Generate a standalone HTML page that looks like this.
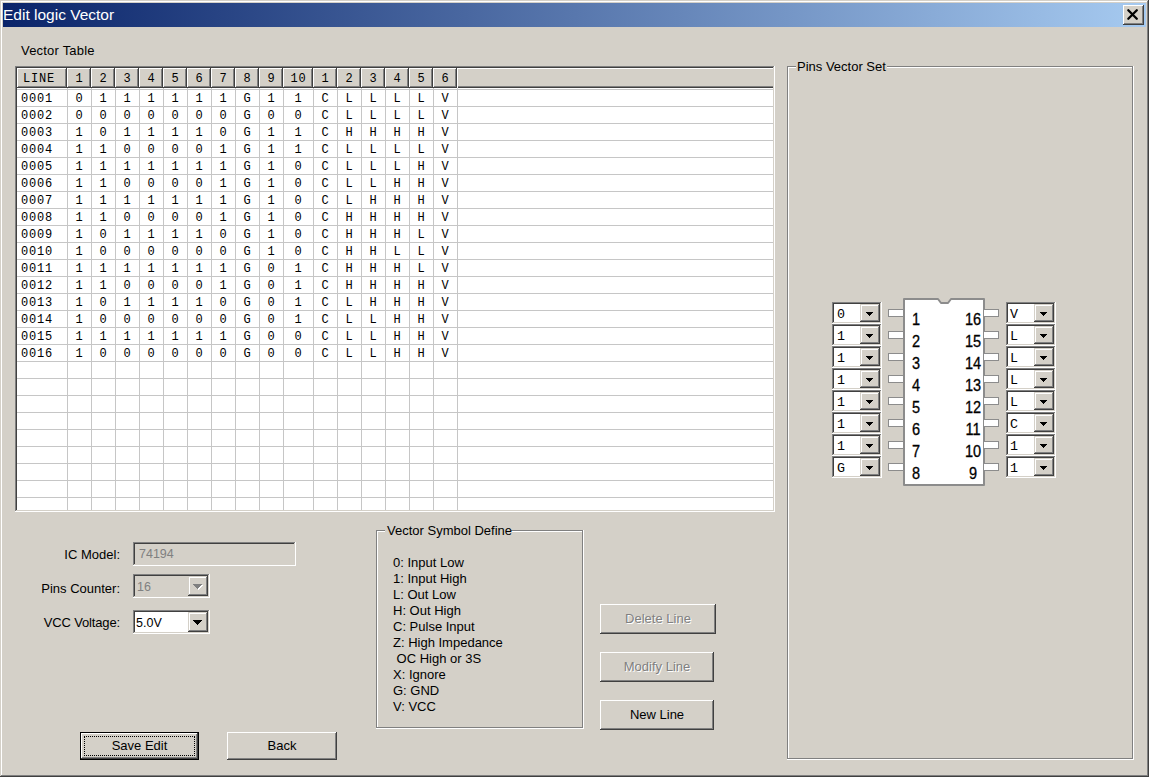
<!DOCTYPE html>
<html><head><meta charset="utf-8"><style>
html,body{margin:0;padding:0;}
body{width:1149px;height:777px;overflow:hidden;background:#d4d0c8;position:relative;font-family:'Liberation Sans', sans-serif;}
body>div,body>svg{position:absolute;}
</style></head><body>
<div style="left:0px;top:0px;width:1149px;height:1px;background:#d4d0c8;"></div>
<div style="left:0px;top:0px;width:1px;height:777px;background:#d4d0c8;"></div>
<div style="left:1px;top:1px;width:1147px;height:1px;background:#ffffff;"></div>
<div style="left:1px;top:1px;width:1px;height:775px;background:#ffffff;"></div>
<div style="left:1147px;top:1px;width:1px;height:775px;background:#808080;"></div>
<div style="left:1px;top:775px;width:1147px;height:1px;background:#808080;"></div>
<div style="left:1148px;top:0px;width:1px;height:777px;background:#404040;"></div>
<div style="left:0px;top:776px;width:1149px;height:1px;background:#404040;"></div>
<div style="left:3px;top:3px;width:1143px;height:24px;background:linear-gradient(to right,#0a246a,#a6caf0);"></div>
<div style="left:3px;top:6.88px;font:normal 15.5px/15.5px 'Liberation Sans', sans-serif;color:#fff;white-space:pre;">Edit logic Vector</div>
<div style="left:1123px;top:5px;width:21px;height:20px;background:#d4d0c8;box-shadow:inset -1px -1px 0 0 #404040,inset 1px 1px 0 0 #ffffff,inset -2px -2px 0 0 #808080,inset 2px 2px 0 0 #d4d0c8"></div>
<svg style="left:1123px;top:5px;width:21px;height:20px" width="21" height="20"><path d="M5.3 5.2L13.8 13.8M13.8 5.2L5.3 13.8" stroke="#000" stroke-width="2.3" stroke-linecap="round" fill="none"/></svg>
<div style="left:21px;top:44.00px;font:normal 13px/13px 'Liberation Sans', sans-serif;color:#000;white-space:pre;letter-spacing:0.2px;">Vector Table</div>
<div style="left:15px;top:66px;width:760px;height:446px;background:#ffffff;box-shadow:inset -1px -1px 0 0 #ffffff,inset 1px 1px 0 0 #808080,inset -2px -2px 0 0 #d4d0c8,inset 2px 2px 0 0 #404040"></div>
<div style="left:17px;top:68px;width:50px;height:20px;background:#d4d0c8;box-shadow:inset -1px -1px 0 0 #404040,inset 1px 1px 0 0 #ffffff,inset -2px -2px 0 0 #808080,inset 2px 2px 0 0 #d4d0c8"></div>
<div style="left:67px;top:68px;width:24px;height:20px;background:#d4d0c8;box-shadow:inset -1px -1px 0 0 #404040,inset 1px 1px 0 0 #ffffff,inset -2px -2px 0 0 #808080,inset 2px 2px 0 0 #d4d0c8"></div>
<div style="left:91px;top:68px;width:24px;height:20px;background:#d4d0c8;box-shadow:inset -1px -1px 0 0 #404040,inset 1px 1px 0 0 #ffffff,inset -2px -2px 0 0 #808080,inset 2px 2px 0 0 #d4d0c8"></div>
<div style="left:115px;top:68px;width:24px;height:20px;background:#d4d0c8;box-shadow:inset -1px -1px 0 0 #404040,inset 1px 1px 0 0 #ffffff,inset -2px -2px 0 0 #808080,inset 2px 2px 0 0 #d4d0c8"></div>
<div style="left:139px;top:68px;width:24px;height:20px;background:#d4d0c8;box-shadow:inset -1px -1px 0 0 #404040,inset 1px 1px 0 0 #ffffff,inset -2px -2px 0 0 #808080,inset 2px 2px 0 0 #d4d0c8"></div>
<div style="left:163px;top:68px;width:24px;height:20px;background:#d4d0c8;box-shadow:inset -1px -1px 0 0 #404040,inset 1px 1px 0 0 #ffffff,inset -2px -2px 0 0 #808080,inset 2px 2px 0 0 #d4d0c8"></div>
<div style="left:187px;top:68px;width:24px;height:20px;background:#d4d0c8;box-shadow:inset -1px -1px 0 0 #404040,inset 1px 1px 0 0 #ffffff,inset -2px -2px 0 0 #808080,inset 2px 2px 0 0 #d4d0c8"></div>
<div style="left:211px;top:68px;width:24px;height:20px;background:#d4d0c8;box-shadow:inset -1px -1px 0 0 #404040,inset 1px 1px 0 0 #ffffff,inset -2px -2px 0 0 #808080,inset 2px 2px 0 0 #d4d0c8"></div>
<div style="left:235px;top:68px;width:24px;height:20px;background:#d4d0c8;box-shadow:inset -1px -1px 0 0 #404040,inset 1px 1px 0 0 #ffffff,inset -2px -2px 0 0 #808080,inset 2px 2px 0 0 #d4d0c8"></div>
<div style="left:259px;top:68px;width:24px;height:20px;background:#d4d0c8;box-shadow:inset -1px -1px 0 0 #404040,inset 1px 1px 0 0 #ffffff,inset -2px -2px 0 0 #808080,inset 2px 2px 0 0 #d4d0c8"></div>
<div style="left:283px;top:68px;width:30px;height:20px;background:#d4d0c8;box-shadow:inset -1px -1px 0 0 #404040,inset 1px 1px 0 0 #ffffff,inset -2px -2px 0 0 #808080,inset 2px 2px 0 0 #d4d0c8"></div>
<div style="left:313px;top:68px;width:24px;height:20px;background:#d4d0c8;box-shadow:inset -1px -1px 0 0 #404040,inset 1px 1px 0 0 #ffffff,inset -2px -2px 0 0 #808080,inset 2px 2px 0 0 #d4d0c8"></div>
<div style="left:337px;top:68px;width:24px;height:20px;background:#d4d0c8;box-shadow:inset -1px -1px 0 0 #404040,inset 1px 1px 0 0 #ffffff,inset -2px -2px 0 0 #808080,inset 2px 2px 0 0 #d4d0c8"></div>
<div style="left:361px;top:68px;width:24px;height:20px;background:#d4d0c8;box-shadow:inset -1px -1px 0 0 #404040,inset 1px 1px 0 0 #ffffff,inset -2px -2px 0 0 #808080,inset 2px 2px 0 0 #d4d0c8"></div>
<div style="left:385px;top:68px;width:24px;height:20px;background:#d4d0c8;box-shadow:inset -1px -1px 0 0 #404040,inset 1px 1px 0 0 #ffffff,inset -2px -2px 0 0 #808080,inset 2px 2px 0 0 #d4d0c8"></div>
<div style="left:409px;top:68px;width:24px;height:20px;background:#d4d0c8;box-shadow:inset -1px -1px 0 0 #404040,inset 1px 1px 0 0 #ffffff,inset -2px -2px 0 0 #808080,inset 2px 2px 0 0 #d4d0c8"></div>
<div style="left:433px;top:68px;width:24px;height:20px;background:#d4d0c8;box-shadow:inset -1px -1px 0 0 #404040,inset 1px 1px 0 0 #ffffff,inset -2px -2px 0 0 #808080,inset 2px 2px 0 0 #d4d0c8"></div>
<div style="left:457px;top:68px;width:316px;height:20px;background:#d4d0c8;box-shadow:inset 1px 1px 0 0 #fff,inset 0 -1px 0 0 #404040,inset 0 -2px 0 0 #808080"></div>
<div style="left:17px;top:89px;width:756px;height:1px;background:#c6c6c6;"></div>
<div style="left:17px;top:106px;width:756px;height:1px;background:#c6c6c6;"></div>
<div style="left:17px;top:123px;width:756px;height:1px;background:#c6c6c6;"></div>
<div style="left:17px;top:140px;width:756px;height:1px;background:#c6c6c6;"></div>
<div style="left:17px;top:157px;width:756px;height:1px;background:#c6c6c6;"></div>
<div style="left:17px;top:174px;width:756px;height:1px;background:#c6c6c6;"></div>
<div style="left:17px;top:191px;width:756px;height:1px;background:#c6c6c6;"></div>
<div style="left:17px;top:208px;width:756px;height:1px;background:#c6c6c6;"></div>
<div style="left:17px;top:225px;width:756px;height:1px;background:#c6c6c6;"></div>
<div style="left:17px;top:242px;width:756px;height:1px;background:#c6c6c6;"></div>
<div style="left:17px;top:259px;width:756px;height:1px;background:#c6c6c6;"></div>
<div style="left:17px;top:276px;width:756px;height:1px;background:#c6c6c6;"></div>
<div style="left:17px;top:293px;width:756px;height:1px;background:#c6c6c6;"></div>
<div style="left:17px;top:310px;width:756px;height:1px;background:#c6c6c6;"></div>
<div style="left:17px;top:327px;width:756px;height:1px;background:#c6c6c6;"></div>
<div style="left:17px;top:344px;width:756px;height:1px;background:#c6c6c6;"></div>
<div style="left:17px;top:361px;width:756px;height:1px;background:#c6c6c6;"></div>
<div style="left:17px;top:378px;width:756px;height:1px;background:#c6c6c6;"></div>
<div style="left:17px;top:395px;width:756px;height:1px;background:#c6c6c6;"></div>
<div style="left:17px;top:412px;width:756px;height:1px;background:#c6c6c6;"></div>
<div style="left:17px;top:429px;width:756px;height:1px;background:#c6c6c6;"></div>
<div style="left:17px;top:446px;width:756px;height:1px;background:#c6c6c6;"></div>
<div style="left:17px;top:463px;width:756px;height:1px;background:#c6c6c6;"></div>
<div style="left:17px;top:480px;width:756px;height:1px;background:#c6c6c6;"></div>
<div style="left:17px;top:497px;width:756px;height:1px;background:#c6c6c6;"></div>
<div style="left:67px;top:88px;width:1px;height:422px;background:#c6c6c6;"></div>
<div style="left:91px;top:88px;width:1px;height:422px;background:#c6c6c6;"></div>
<div style="left:115px;top:88px;width:1px;height:422px;background:#c6c6c6;"></div>
<div style="left:139px;top:88px;width:1px;height:422px;background:#c6c6c6;"></div>
<div style="left:163px;top:88px;width:1px;height:422px;background:#c6c6c6;"></div>
<div style="left:187px;top:88px;width:1px;height:422px;background:#c6c6c6;"></div>
<div style="left:211px;top:88px;width:1px;height:422px;background:#c6c6c6;"></div>
<div style="left:235px;top:88px;width:1px;height:422px;background:#c6c6c6;"></div>
<div style="left:259px;top:88px;width:1px;height:422px;background:#c6c6c6;"></div>
<div style="left:283px;top:88px;width:1px;height:422px;background:#c6c6c6;"></div>
<div style="left:313px;top:88px;width:1px;height:422px;background:#c6c6c6;"></div>
<div style="left:337px;top:88px;width:1px;height:422px;background:#c6c6c6;"></div>
<div style="left:361px;top:88px;width:1px;height:422px;background:#c6c6c6;"></div>
<div style="left:385px;top:88px;width:1px;height:422px;background:#c6c6c6;"></div>
<div style="left:409px;top:88px;width:1px;height:422px;background:#c6c6c6;"></div>
<div style="left:433px;top:88px;width:1px;height:422px;background:#c6c6c6;"></div>
<div style="left:457px;top:88px;width:1px;height:422px;background:#c6c6c6;"></div>
<div style="left:23px;top:73.40px;font:normal 12px/12px 'Liberation Mono', monospace;color:#000;white-space:pre;letter-spacing:0.8px;">LINE</div>
<div style="left:-121.0px;width:400px;text-align:center;top:73.40px;font:normal 12px/12px 'Liberation Mono', monospace;color:#000;white-space:pre;">1</div>
<div style="left:-97.0px;width:400px;text-align:center;top:73.40px;font:normal 12px/12px 'Liberation Mono', monospace;color:#000;white-space:pre;">2</div>
<div style="left:-73.0px;width:400px;text-align:center;top:73.40px;font:normal 12px/12px 'Liberation Mono', monospace;color:#000;white-space:pre;">3</div>
<div style="left:-49.0px;width:400px;text-align:center;top:73.40px;font:normal 12px/12px 'Liberation Mono', monospace;color:#000;white-space:pre;">4</div>
<div style="left:-25.0px;width:400px;text-align:center;top:73.40px;font:normal 12px/12px 'Liberation Mono', monospace;color:#000;white-space:pre;">5</div>
<div style="left:-1.0px;width:400px;text-align:center;top:73.40px;font:normal 12px/12px 'Liberation Mono', monospace;color:#000;white-space:pre;">6</div>
<div style="left:23.0px;width:400px;text-align:center;top:73.40px;font:normal 12px/12px 'Liberation Mono', monospace;color:#000;white-space:pre;">7</div>
<div style="left:47.0px;width:400px;text-align:center;top:73.40px;font:normal 12px/12px 'Liberation Mono', monospace;color:#000;white-space:pre;">8</div>
<div style="left:71.0px;width:400px;text-align:center;top:73.40px;font:normal 12px/12px 'Liberation Mono', monospace;color:#000;white-space:pre;">9</div>
<div style="left:98.0px;width:400px;text-align:center;top:73.40px;font:normal 12px/12px 'Liberation Mono', monospace;color:#000;white-space:pre;letter-spacing:0.8px;text-indent:0.8px;">10</div>
<div style="left:125.0px;width:400px;text-align:center;top:73.40px;font:normal 12px/12px 'Liberation Mono', monospace;color:#000;white-space:pre;">1</div>
<div style="left:149.0px;width:400px;text-align:center;top:73.40px;font:normal 12px/12px 'Liberation Mono', monospace;color:#000;white-space:pre;">2</div>
<div style="left:173.0px;width:400px;text-align:center;top:73.40px;font:normal 12px/12px 'Liberation Mono', monospace;color:#000;white-space:pre;">3</div>
<div style="left:197.0px;width:400px;text-align:center;top:73.40px;font:normal 12px/12px 'Liberation Mono', monospace;color:#000;white-space:pre;">4</div>
<div style="left:221.0px;width:400px;text-align:center;top:73.40px;font:normal 12px/12px 'Liberation Mono', monospace;color:#000;white-space:pre;">5</div>
<div style="left:245.0px;width:400px;text-align:center;top:73.40px;font:normal 12px/12px 'Liberation Mono', monospace;color:#000;white-space:pre;">6</div>
<div style="left:21px;top:93.40px;font:normal 12px/12px 'Liberation Mono', monospace;color:#000;white-space:pre;letter-spacing:0.8px;">0001</div>
<div style="left:-121.0px;width:400px;text-align:center;top:93.40px;font:normal 12px/12px 'Liberation Mono', monospace;color:#000;white-space:pre;">0</div>
<div style="left:-97.0px;width:400px;text-align:center;top:93.40px;font:normal 12px/12px 'Liberation Mono', monospace;color:#000;white-space:pre;">1</div>
<div style="left:-73.0px;width:400px;text-align:center;top:93.40px;font:normal 12px/12px 'Liberation Mono', monospace;color:#000;white-space:pre;">1</div>
<div style="left:-49.0px;width:400px;text-align:center;top:93.40px;font:normal 12px/12px 'Liberation Mono', monospace;color:#000;white-space:pre;">1</div>
<div style="left:-25.0px;width:400px;text-align:center;top:93.40px;font:normal 12px/12px 'Liberation Mono', monospace;color:#000;white-space:pre;">1</div>
<div style="left:-1.0px;width:400px;text-align:center;top:93.40px;font:normal 12px/12px 'Liberation Mono', monospace;color:#000;white-space:pre;">1</div>
<div style="left:23.0px;width:400px;text-align:center;top:93.40px;font:normal 12px/12px 'Liberation Mono', monospace;color:#000;white-space:pre;">1</div>
<div style="left:47.0px;width:400px;text-align:center;top:93.40px;font:normal 12px/12px 'Liberation Mono', monospace;color:#000;white-space:pre;">G</div>
<div style="left:71.0px;width:400px;text-align:center;top:93.40px;font:normal 12px/12px 'Liberation Mono', monospace;color:#000;white-space:pre;">1</div>
<div style="left:98.0px;width:400px;text-align:center;top:93.40px;font:normal 12px/12px 'Liberation Mono', monospace;color:#000;white-space:pre;">1</div>
<div style="left:125.0px;width:400px;text-align:center;top:93.40px;font:normal 12px/12px 'Liberation Mono', monospace;color:#000;white-space:pre;">C</div>
<div style="left:149.0px;width:400px;text-align:center;top:93.40px;font:normal 12px/12px 'Liberation Mono', monospace;color:#000;white-space:pre;">L</div>
<div style="left:173.0px;width:400px;text-align:center;top:93.40px;font:normal 12px/12px 'Liberation Mono', monospace;color:#000;white-space:pre;">L</div>
<div style="left:197.0px;width:400px;text-align:center;top:93.40px;font:normal 12px/12px 'Liberation Mono', monospace;color:#000;white-space:pre;">L</div>
<div style="left:221.0px;width:400px;text-align:center;top:93.40px;font:normal 12px/12px 'Liberation Mono', monospace;color:#000;white-space:pre;">L</div>
<div style="left:245.0px;width:400px;text-align:center;top:93.40px;font:normal 12px/12px 'Liberation Mono', monospace;color:#000;white-space:pre;">V</div>
<div style="left:21px;top:110.40px;font:normal 12px/12px 'Liberation Mono', monospace;color:#000;white-space:pre;letter-spacing:0.8px;">0002</div>
<div style="left:-121.0px;width:400px;text-align:center;top:110.40px;font:normal 12px/12px 'Liberation Mono', monospace;color:#000;white-space:pre;">0</div>
<div style="left:-97.0px;width:400px;text-align:center;top:110.40px;font:normal 12px/12px 'Liberation Mono', monospace;color:#000;white-space:pre;">0</div>
<div style="left:-73.0px;width:400px;text-align:center;top:110.40px;font:normal 12px/12px 'Liberation Mono', monospace;color:#000;white-space:pre;">0</div>
<div style="left:-49.0px;width:400px;text-align:center;top:110.40px;font:normal 12px/12px 'Liberation Mono', monospace;color:#000;white-space:pre;">0</div>
<div style="left:-25.0px;width:400px;text-align:center;top:110.40px;font:normal 12px/12px 'Liberation Mono', monospace;color:#000;white-space:pre;">0</div>
<div style="left:-1.0px;width:400px;text-align:center;top:110.40px;font:normal 12px/12px 'Liberation Mono', monospace;color:#000;white-space:pre;">0</div>
<div style="left:23.0px;width:400px;text-align:center;top:110.40px;font:normal 12px/12px 'Liberation Mono', monospace;color:#000;white-space:pre;">0</div>
<div style="left:47.0px;width:400px;text-align:center;top:110.40px;font:normal 12px/12px 'Liberation Mono', monospace;color:#000;white-space:pre;">G</div>
<div style="left:71.0px;width:400px;text-align:center;top:110.40px;font:normal 12px/12px 'Liberation Mono', monospace;color:#000;white-space:pre;">0</div>
<div style="left:98.0px;width:400px;text-align:center;top:110.40px;font:normal 12px/12px 'Liberation Mono', monospace;color:#000;white-space:pre;">0</div>
<div style="left:125.0px;width:400px;text-align:center;top:110.40px;font:normal 12px/12px 'Liberation Mono', monospace;color:#000;white-space:pre;">C</div>
<div style="left:149.0px;width:400px;text-align:center;top:110.40px;font:normal 12px/12px 'Liberation Mono', monospace;color:#000;white-space:pre;">L</div>
<div style="left:173.0px;width:400px;text-align:center;top:110.40px;font:normal 12px/12px 'Liberation Mono', monospace;color:#000;white-space:pre;">L</div>
<div style="left:197.0px;width:400px;text-align:center;top:110.40px;font:normal 12px/12px 'Liberation Mono', monospace;color:#000;white-space:pre;">L</div>
<div style="left:221.0px;width:400px;text-align:center;top:110.40px;font:normal 12px/12px 'Liberation Mono', monospace;color:#000;white-space:pre;">L</div>
<div style="left:245.0px;width:400px;text-align:center;top:110.40px;font:normal 12px/12px 'Liberation Mono', monospace;color:#000;white-space:pre;">V</div>
<div style="left:21px;top:127.40px;font:normal 12px/12px 'Liberation Mono', monospace;color:#000;white-space:pre;letter-spacing:0.8px;">0003</div>
<div style="left:-121.0px;width:400px;text-align:center;top:127.40px;font:normal 12px/12px 'Liberation Mono', monospace;color:#000;white-space:pre;">1</div>
<div style="left:-97.0px;width:400px;text-align:center;top:127.40px;font:normal 12px/12px 'Liberation Mono', monospace;color:#000;white-space:pre;">0</div>
<div style="left:-73.0px;width:400px;text-align:center;top:127.40px;font:normal 12px/12px 'Liberation Mono', monospace;color:#000;white-space:pre;">1</div>
<div style="left:-49.0px;width:400px;text-align:center;top:127.40px;font:normal 12px/12px 'Liberation Mono', monospace;color:#000;white-space:pre;">1</div>
<div style="left:-25.0px;width:400px;text-align:center;top:127.40px;font:normal 12px/12px 'Liberation Mono', monospace;color:#000;white-space:pre;">1</div>
<div style="left:-1.0px;width:400px;text-align:center;top:127.40px;font:normal 12px/12px 'Liberation Mono', monospace;color:#000;white-space:pre;">1</div>
<div style="left:23.0px;width:400px;text-align:center;top:127.40px;font:normal 12px/12px 'Liberation Mono', monospace;color:#000;white-space:pre;">0</div>
<div style="left:47.0px;width:400px;text-align:center;top:127.40px;font:normal 12px/12px 'Liberation Mono', monospace;color:#000;white-space:pre;">G</div>
<div style="left:71.0px;width:400px;text-align:center;top:127.40px;font:normal 12px/12px 'Liberation Mono', monospace;color:#000;white-space:pre;">1</div>
<div style="left:98.0px;width:400px;text-align:center;top:127.40px;font:normal 12px/12px 'Liberation Mono', monospace;color:#000;white-space:pre;">1</div>
<div style="left:125.0px;width:400px;text-align:center;top:127.40px;font:normal 12px/12px 'Liberation Mono', monospace;color:#000;white-space:pre;">C</div>
<div style="left:149.0px;width:400px;text-align:center;top:127.40px;font:normal 12px/12px 'Liberation Mono', monospace;color:#000;white-space:pre;">H</div>
<div style="left:173.0px;width:400px;text-align:center;top:127.40px;font:normal 12px/12px 'Liberation Mono', monospace;color:#000;white-space:pre;">H</div>
<div style="left:197.0px;width:400px;text-align:center;top:127.40px;font:normal 12px/12px 'Liberation Mono', monospace;color:#000;white-space:pre;">H</div>
<div style="left:221.0px;width:400px;text-align:center;top:127.40px;font:normal 12px/12px 'Liberation Mono', monospace;color:#000;white-space:pre;">H</div>
<div style="left:245.0px;width:400px;text-align:center;top:127.40px;font:normal 12px/12px 'Liberation Mono', monospace;color:#000;white-space:pre;">V</div>
<div style="left:21px;top:144.40px;font:normal 12px/12px 'Liberation Mono', monospace;color:#000;white-space:pre;letter-spacing:0.8px;">0004</div>
<div style="left:-121.0px;width:400px;text-align:center;top:144.40px;font:normal 12px/12px 'Liberation Mono', monospace;color:#000;white-space:pre;">1</div>
<div style="left:-97.0px;width:400px;text-align:center;top:144.40px;font:normal 12px/12px 'Liberation Mono', monospace;color:#000;white-space:pre;">1</div>
<div style="left:-73.0px;width:400px;text-align:center;top:144.40px;font:normal 12px/12px 'Liberation Mono', monospace;color:#000;white-space:pre;">0</div>
<div style="left:-49.0px;width:400px;text-align:center;top:144.40px;font:normal 12px/12px 'Liberation Mono', monospace;color:#000;white-space:pre;">0</div>
<div style="left:-25.0px;width:400px;text-align:center;top:144.40px;font:normal 12px/12px 'Liberation Mono', monospace;color:#000;white-space:pre;">0</div>
<div style="left:-1.0px;width:400px;text-align:center;top:144.40px;font:normal 12px/12px 'Liberation Mono', monospace;color:#000;white-space:pre;">0</div>
<div style="left:23.0px;width:400px;text-align:center;top:144.40px;font:normal 12px/12px 'Liberation Mono', monospace;color:#000;white-space:pre;">1</div>
<div style="left:47.0px;width:400px;text-align:center;top:144.40px;font:normal 12px/12px 'Liberation Mono', monospace;color:#000;white-space:pre;">G</div>
<div style="left:71.0px;width:400px;text-align:center;top:144.40px;font:normal 12px/12px 'Liberation Mono', monospace;color:#000;white-space:pre;">1</div>
<div style="left:98.0px;width:400px;text-align:center;top:144.40px;font:normal 12px/12px 'Liberation Mono', monospace;color:#000;white-space:pre;">1</div>
<div style="left:125.0px;width:400px;text-align:center;top:144.40px;font:normal 12px/12px 'Liberation Mono', monospace;color:#000;white-space:pre;">C</div>
<div style="left:149.0px;width:400px;text-align:center;top:144.40px;font:normal 12px/12px 'Liberation Mono', monospace;color:#000;white-space:pre;">L</div>
<div style="left:173.0px;width:400px;text-align:center;top:144.40px;font:normal 12px/12px 'Liberation Mono', monospace;color:#000;white-space:pre;">L</div>
<div style="left:197.0px;width:400px;text-align:center;top:144.40px;font:normal 12px/12px 'Liberation Mono', monospace;color:#000;white-space:pre;">L</div>
<div style="left:221.0px;width:400px;text-align:center;top:144.40px;font:normal 12px/12px 'Liberation Mono', monospace;color:#000;white-space:pre;">L</div>
<div style="left:245.0px;width:400px;text-align:center;top:144.40px;font:normal 12px/12px 'Liberation Mono', monospace;color:#000;white-space:pre;">V</div>
<div style="left:21px;top:161.40px;font:normal 12px/12px 'Liberation Mono', monospace;color:#000;white-space:pre;letter-spacing:0.8px;">0005</div>
<div style="left:-121.0px;width:400px;text-align:center;top:161.40px;font:normal 12px/12px 'Liberation Mono', monospace;color:#000;white-space:pre;">1</div>
<div style="left:-97.0px;width:400px;text-align:center;top:161.40px;font:normal 12px/12px 'Liberation Mono', monospace;color:#000;white-space:pre;">1</div>
<div style="left:-73.0px;width:400px;text-align:center;top:161.40px;font:normal 12px/12px 'Liberation Mono', monospace;color:#000;white-space:pre;">1</div>
<div style="left:-49.0px;width:400px;text-align:center;top:161.40px;font:normal 12px/12px 'Liberation Mono', monospace;color:#000;white-space:pre;">1</div>
<div style="left:-25.0px;width:400px;text-align:center;top:161.40px;font:normal 12px/12px 'Liberation Mono', monospace;color:#000;white-space:pre;">1</div>
<div style="left:-1.0px;width:400px;text-align:center;top:161.40px;font:normal 12px/12px 'Liberation Mono', monospace;color:#000;white-space:pre;">1</div>
<div style="left:23.0px;width:400px;text-align:center;top:161.40px;font:normal 12px/12px 'Liberation Mono', monospace;color:#000;white-space:pre;">1</div>
<div style="left:47.0px;width:400px;text-align:center;top:161.40px;font:normal 12px/12px 'Liberation Mono', monospace;color:#000;white-space:pre;">G</div>
<div style="left:71.0px;width:400px;text-align:center;top:161.40px;font:normal 12px/12px 'Liberation Mono', monospace;color:#000;white-space:pre;">1</div>
<div style="left:98.0px;width:400px;text-align:center;top:161.40px;font:normal 12px/12px 'Liberation Mono', monospace;color:#000;white-space:pre;">0</div>
<div style="left:125.0px;width:400px;text-align:center;top:161.40px;font:normal 12px/12px 'Liberation Mono', monospace;color:#000;white-space:pre;">C</div>
<div style="left:149.0px;width:400px;text-align:center;top:161.40px;font:normal 12px/12px 'Liberation Mono', monospace;color:#000;white-space:pre;">L</div>
<div style="left:173.0px;width:400px;text-align:center;top:161.40px;font:normal 12px/12px 'Liberation Mono', monospace;color:#000;white-space:pre;">L</div>
<div style="left:197.0px;width:400px;text-align:center;top:161.40px;font:normal 12px/12px 'Liberation Mono', monospace;color:#000;white-space:pre;">L</div>
<div style="left:221.0px;width:400px;text-align:center;top:161.40px;font:normal 12px/12px 'Liberation Mono', monospace;color:#000;white-space:pre;">H</div>
<div style="left:245.0px;width:400px;text-align:center;top:161.40px;font:normal 12px/12px 'Liberation Mono', monospace;color:#000;white-space:pre;">V</div>
<div style="left:21px;top:178.40px;font:normal 12px/12px 'Liberation Mono', monospace;color:#000;white-space:pre;letter-spacing:0.8px;">0006</div>
<div style="left:-121.0px;width:400px;text-align:center;top:178.40px;font:normal 12px/12px 'Liberation Mono', monospace;color:#000;white-space:pre;">1</div>
<div style="left:-97.0px;width:400px;text-align:center;top:178.40px;font:normal 12px/12px 'Liberation Mono', monospace;color:#000;white-space:pre;">1</div>
<div style="left:-73.0px;width:400px;text-align:center;top:178.40px;font:normal 12px/12px 'Liberation Mono', monospace;color:#000;white-space:pre;">0</div>
<div style="left:-49.0px;width:400px;text-align:center;top:178.40px;font:normal 12px/12px 'Liberation Mono', monospace;color:#000;white-space:pre;">0</div>
<div style="left:-25.0px;width:400px;text-align:center;top:178.40px;font:normal 12px/12px 'Liberation Mono', monospace;color:#000;white-space:pre;">0</div>
<div style="left:-1.0px;width:400px;text-align:center;top:178.40px;font:normal 12px/12px 'Liberation Mono', monospace;color:#000;white-space:pre;">0</div>
<div style="left:23.0px;width:400px;text-align:center;top:178.40px;font:normal 12px/12px 'Liberation Mono', monospace;color:#000;white-space:pre;">1</div>
<div style="left:47.0px;width:400px;text-align:center;top:178.40px;font:normal 12px/12px 'Liberation Mono', monospace;color:#000;white-space:pre;">G</div>
<div style="left:71.0px;width:400px;text-align:center;top:178.40px;font:normal 12px/12px 'Liberation Mono', monospace;color:#000;white-space:pre;">1</div>
<div style="left:98.0px;width:400px;text-align:center;top:178.40px;font:normal 12px/12px 'Liberation Mono', monospace;color:#000;white-space:pre;">0</div>
<div style="left:125.0px;width:400px;text-align:center;top:178.40px;font:normal 12px/12px 'Liberation Mono', monospace;color:#000;white-space:pre;">C</div>
<div style="left:149.0px;width:400px;text-align:center;top:178.40px;font:normal 12px/12px 'Liberation Mono', monospace;color:#000;white-space:pre;">L</div>
<div style="left:173.0px;width:400px;text-align:center;top:178.40px;font:normal 12px/12px 'Liberation Mono', monospace;color:#000;white-space:pre;">L</div>
<div style="left:197.0px;width:400px;text-align:center;top:178.40px;font:normal 12px/12px 'Liberation Mono', monospace;color:#000;white-space:pre;">H</div>
<div style="left:221.0px;width:400px;text-align:center;top:178.40px;font:normal 12px/12px 'Liberation Mono', monospace;color:#000;white-space:pre;">H</div>
<div style="left:245.0px;width:400px;text-align:center;top:178.40px;font:normal 12px/12px 'Liberation Mono', monospace;color:#000;white-space:pre;">V</div>
<div style="left:21px;top:195.40px;font:normal 12px/12px 'Liberation Mono', monospace;color:#000;white-space:pre;letter-spacing:0.8px;">0007</div>
<div style="left:-121.0px;width:400px;text-align:center;top:195.40px;font:normal 12px/12px 'Liberation Mono', monospace;color:#000;white-space:pre;">1</div>
<div style="left:-97.0px;width:400px;text-align:center;top:195.40px;font:normal 12px/12px 'Liberation Mono', monospace;color:#000;white-space:pre;">1</div>
<div style="left:-73.0px;width:400px;text-align:center;top:195.40px;font:normal 12px/12px 'Liberation Mono', monospace;color:#000;white-space:pre;">1</div>
<div style="left:-49.0px;width:400px;text-align:center;top:195.40px;font:normal 12px/12px 'Liberation Mono', monospace;color:#000;white-space:pre;">1</div>
<div style="left:-25.0px;width:400px;text-align:center;top:195.40px;font:normal 12px/12px 'Liberation Mono', monospace;color:#000;white-space:pre;">1</div>
<div style="left:-1.0px;width:400px;text-align:center;top:195.40px;font:normal 12px/12px 'Liberation Mono', monospace;color:#000;white-space:pre;">1</div>
<div style="left:23.0px;width:400px;text-align:center;top:195.40px;font:normal 12px/12px 'Liberation Mono', monospace;color:#000;white-space:pre;">1</div>
<div style="left:47.0px;width:400px;text-align:center;top:195.40px;font:normal 12px/12px 'Liberation Mono', monospace;color:#000;white-space:pre;">G</div>
<div style="left:71.0px;width:400px;text-align:center;top:195.40px;font:normal 12px/12px 'Liberation Mono', monospace;color:#000;white-space:pre;">1</div>
<div style="left:98.0px;width:400px;text-align:center;top:195.40px;font:normal 12px/12px 'Liberation Mono', monospace;color:#000;white-space:pre;">0</div>
<div style="left:125.0px;width:400px;text-align:center;top:195.40px;font:normal 12px/12px 'Liberation Mono', monospace;color:#000;white-space:pre;">C</div>
<div style="left:149.0px;width:400px;text-align:center;top:195.40px;font:normal 12px/12px 'Liberation Mono', monospace;color:#000;white-space:pre;">L</div>
<div style="left:173.0px;width:400px;text-align:center;top:195.40px;font:normal 12px/12px 'Liberation Mono', monospace;color:#000;white-space:pre;">H</div>
<div style="left:197.0px;width:400px;text-align:center;top:195.40px;font:normal 12px/12px 'Liberation Mono', monospace;color:#000;white-space:pre;">H</div>
<div style="left:221.0px;width:400px;text-align:center;top:195.40px;font:normal 12px/12px 'Liberation Mono', monospace;color:#000;white-space:pre;">H</div>
<div style="left:245.0px;width:400px;text-align:center;top:195.40px;font:normal 12px/12px 'Liberation Mono', monospace;color:#000;white-space:pre;">V</div>
<div style="left:21px;top:212.40px;font:normal 12px/12px 'Liberation Mono', monospace;color:#000;white-space:pre;letter-spacing:0.8px;">0008</div>
<div style="left:-121.0px;width:400px;text-align:center;top:212.40px;font:normal 12px/12px 'Liberation Mono', monospace;color:#000;white-space:pre;">1</div>
<div style="left:-97.0px;width:400px;text-align:center;top:212.40px;font:normal 12px/12px 'Liberation Mono', monospace;color:#000;white-space:pre;">1</div>
<div style="left:-73.0px;width:400px;text-align:center;top:212.40px;font:normal 12px/12px 'Liberation Mono', monospace;color:#000;white-space:pre;">0</div>
<div style="left:-49.0px;width:400px;text-align:center;top:212.40px;font:normal 12px/12px 'Liberation Mono', monospace;color:#000;white-space:pre;">0</div>
<div style="left:-25.0px;width:400px;text-align:center;top:212.40px;font:normal 12px/12px 'Liberation Mono', monospace;color:#000;white-space:pre;">0</div>
<div style="left:-1.0px;width:400px;text-align:center;top:212.40px;font:normal 12px/12px 'Liberation Mono', monospace;color:#000;white-space:pre;">0</div>
<div style="left:23.0px;width:400px;text-align:center;top:212.40px;font:normal 12px/12px 'Liberation Mono', monospace;color:#000;white-space:pre;">1</div>
<div style="left:47.0px;width:400px;text-align:center;top:212.40px;font:normal 12px/12px 'Liberation Mono', monospace;color:#000;white-space:pre;">G</div>
<div style="left:71.0px;width:400px;text-align:center;top:212.40px;font:normal 12px/12px 'Liberation Mono', monospace;color:#000;white-space:pre;">1</div>
<div style="left:98.0px;width:400px;text-align:center;top:212.40px;font:normal 12px/12px 'Liberation Mono', monospace;color:#000;white-space:pre;">0</div>
<div style="left:125.0px;width:400px;text-align:center;top:212.40px;font:normal 12px/12px 'Liberation Mono', monospace;color:#000;white-space:pre;">C</div>
<div style="left:149.0px;width:400px;text-align:center;top:212.40px;font:normal 12px/12px 'Liberation Mono', monospace;color:#000;white-space:pre;">H</div>
<div style="left:173.0px;width:400px;text-align:center;top:212.40px;font:normal 12px/12px 'Liberation Mono', monospace;color:#000;white-space:pre;">H</div>
<div style="left:197.0px;width:400px;text-align:center;top:212.40px;font:normal 12px/12px 'Liberation Mono', monospace;color:#000;white-space:pre;">H</div>
<div style="left:221.0px;width:400px;text-align:center;top:212.40px;font:normal 12px/12px 'Liberation Mono', monospace;color:#000;white-space:pre;">H</div>
<div style="left:245.0px;width:400px;text-align:center;top:212.40px;font:normal 12px/12px 'Liberation Mono', monospace;color:#000;white-space:pre;">V</div>
<div style="left:21px;top:229.40px;font:normal 12px/12px 'Liberation Mono', monospace;color:#000;white-space:pre;letter-spacing:0.8px;">0009</div>
<div style="left:-121.0px;width:400px;text-align:center;top:229.40px;font:normal 12px/12px 'Liberation Mono', monospace;color:#000;white-space:pre;">1</div>
<div style="left:-97.0px;width:400px;text-align:center;top:229.40px;font:normal 12px/12px 'Liberation Mono', monospace;color:#000;white-space:pre;">0</div>
<div style="left:-73.0px;width:400px;text-align:center;top:229.40px;font:normal 12px/12px 'Liberation Mono', monospace;color:#000;white-space:pre;">1</div>
<div style="left:-49.0px;width:400px;text-align:center;top:229.40px;font:normal 12px/12px 'Liberation Mono', monospace;color:#000;white-space:pre;">1</div>
<div style="left:-25.0px;width:400px;text-align:center;top:229.40px;font:normal 12px/12px 'Liberation Mono', monospace;color:#000;white-space:pre;">1</div>
<div style="left:-1.0px;width:400px;text-align:center;top:229.40px;font:normal 12px/12px 'Liberation Mono', monospace;color:#000;white-space:pre;">1</div>
<div style="left:23.0px;width:400px;text-align:center;top:229.40px;font:normal 12px/12px 'Liberation Mono', monospace;color:#000;white-space:pre;">0</div>
<div style="left:47.0px;width:400px;text-align:center;top:229.40px;font:normal 12px/12px 'Liberation Mono', monospace;color:#000;white-space:pre;">G</div>
<div style="left:71.0px;width:400px;text-align:center;top:229.40px;font:normal 12px/12px 'Liberation Mono', monospace;color:#000;white-space:pre;">1</div>
<div style="left:98.0px;width:400px;text-align:center;top:229.40px;font:normal 12px/12px 'Liberation Mono', monospace;color:#000;white-space:pre;">0</div>
<div style="left:125.0px;width:400px;text-align:center;top:229.40px;font:normal 12px/12px 'Liberation Mono', monospace;color:#000;white-space:pre;">C</div>
<div style="left:149.0px;width:400px;text-align:center;top:229.40px;font:normal 12px/12px 'Liberation Mono', monospace;color:#000;white-space:pre;">H</div>
<div style="left:173.0px;width:400px;text-align:center;top:229.40px;font:normal 12px/12px 'Liberation Mono', monospace;color:#000;white-space:pre;">H</div>
<div style="left:197.0px;width:400px;text-align:center;top:229.40px;font:normal 12px/12px 'Liberation Mono', monospace;color:#000;white-space:pre;">H</div>
<div style="left:221.0px;width:400px;text-align:center;top:229.40px;font:normal 12px/12px 'Liberation Mono', monospace;color:#000;white-space:pre;">L</div>
<div style="left:245.0px;width:400px;text-align:center;top:229.40px;font:normal 12px/12px 'Liberation Mono', monospace;color:#000;white-space:pre;">V</div>
<div style="left:21px;top:246.40px;font:normal 12px/12px 'Liberation Mono', monospace;color:#000;white-space:pre;letter-spacing:0.8px;">0010</div>
<div style="left:-121.0px;width:400px;text-align:center;top:246.40px;font:normal 12px/12px 'Liberation Mono', monospace;color:#000;white-space:pre;">1</div>
<div style="left:-97.0px;width:400px;text-align:center;top:246.40px;font:normal 12px/12px 'Liberation Mono', monospace;color:#000;white-space:pre;">0</div>
<div style="left:-73.0px;width:400px;text-align:center;top:246.40px;font:normal 12px/12px 'Liberation Mono', monospace;color:#000;white-space:pre;">0</div>
<div style="left:-49.0px;width:400px;text-align:center;top:246.40px;font:normal 12px/12px 'Liberation Mono', monospace;color:#000;white-space:pre;">0</div>
<div style="left:-25.0px;width:400px;text-align:center;top:246.40px;font:normal 12px/12px 'Liberation Mono', monospace;color:#000;white-space:pre;">0</div>
<div style="left:-1.0px;width:400px;text-align:center;top:246.40px;font:normal 12px/12px 'Liberation Mono', monospace;color:#000;white-space:pre;">0</div>
<div style="left:23.0px;width:400px;text-align:center;top:246.40px;font:normal 12px/12px 'Liberation Mono', monospace;color:#000;white-space:pre;">0</div>
<div style="left:47.0px;width:400px;text-align:center;top:246.40px;font:normal 12px/12px 'Liberation Mono', monospace;color:#000;white-space:pre;">G</div>
<div style="left:71.0px;width:400px;text-align:center;top:246.40px;font:normal 12px/12px 'Liberation Mono', monospace;color:#000;white-space:pre;">1</div>
<div style="left:98.0px;width:400px;text-align:center;top:246.40px;font:normal 12px/12px 'Liberation Mono', monospace;color:#000;white-space:pre;">0</div>
<div style="left:125.0px;width:400px;text-align:center;top:246.40px;font:normal 12px/12px 'Liberation Mono', monospace;color:#000;white-space:pre;">C</div>
<div style="left:149.0px;width:400px;text-align:center;top:246.40px;font:normal 12px/12px 'Liberation Mono', monospace;color:#000;white-space:pre;">H</div>
<div style="left:173.0px;width:400px;text-align:center;top:246.40px;font:normal 12px/12px 'Liberation Mono', monospace;color:#000;white-space:pre;">H</div>
<div style="left:197.0px;width:400px;text-align:center;top:246.40px;font:normal 12px/12px 'Liberation Mono', monospace;color:#000;white-space:pre;">L</div>
<div style="left:221.0px;width:400px;text-align:center;top:246.40px;font:normal 12px/12px 'Liberation Mono', monospace;color:#000;white-space:pre;">L</div>
<div style="left:245.0px;width:400px;text-align:center;top:246.40px;font:normal 12px/12px 'Liberation Mono', monospace;color:#000;white-space:pre;">V</div>
<div style="left:21px;top:263.40px;font:normal 12px/12px 'Liberation Mono', monospace;color:#000;white-space:pre;letter-spacing:0.8px;">0011</div>
<div style="left:-121.0px;width:400px;text-align:center;top:263.40px;font:normal 12px/12px 'Liberation Mono', monospace;color:#000;white-space:pre;">1</div>
<div style="left:-97.0px;width:400px;text-align:center;top:263.40px;font:normal 12px/12px 'Liberation Mono', monospace;color:#000;white-space:pre;">1</div>
<div style="left:-73.0px;width:400px;text-align:center;top:263.40px;font:normal 12px/12px 'Liberation Mono', monospace;color:#000;white-space:pre;">1</div>
<div style="left:-49.0px;width:400px;text-align:center;top:263.40px;font:normal 12px/12px 'Liberation Mono', monospace;color:#000;white-space:pre;">1</div>
<div style="left:-25.0px;width:400px;text-align:center;top:263.40px;font:normal 12px/12px 'Liberation Mono', monospace;color:#000;white-space:pre;">1</div>
<div style="left:-1.0px;width:400px;text-align:center;top:263.40px;font:normal 12px/12px 'Liberation Mono', monospace;color:#000;white-space:pre;">1</div>
<div style="left:23.0px;width:400px;text-align:center;top:263.40px;font:normal 12px/12px 'Liberation Mono', monospace;color:#000;white-space:pre;">1</div>
<div style="left:47.0px;width:400px;text-align:center;top:263.40px;font:normal 12px/12px 'Liberation Mono', monospace;color:#000;white-space:pre;">G</div>
<div style="left:71.0px;width:400px;text-align:center;top:263.40px;font:normal 12px/12px 'Liberation Mono', monospace;color:#000;white-space:pre;">0</div>
<div style="left:98.0px;width:400px;text-align:center;top:263.40px;font:normal 12px/12px 'Liberation Mono', monospace;color:#000;white-space:pre;">1</div>
<div style="left:125.0px;width:400px;text-align:center;top:263.40px;font:normal 12px/12px 'Liberation Mono', monospace;color:#000;white-space:pre;">C</div>
<div style="left:149.0px;width:400px;text-align:center;top:263.40px;font:normal 12px/12px 'Liberation Mono', monospace;color:#000;white-space:pre;">H</div>
<div style="left:173.0px;width:400px;text-align:center;top:263.40px;font:normal 12px/12px 'Liberation Mono', monospace;color:#000;white-space:pre;">H</div>
<div style="left:197.0px;width:400px;text-align:center;top:263.40px;font:normal 12px/12px 'Liberation Mono', monospace;color:#000;white-space:pre;">H</div>
<div style="left:221.0px;width:400px;text-align:center;top:263.40px;font:normal 12px/12px 'Liberation Mono', monospace;color:#000;white-space:pre;">L</div>
<div style="left:245.0px;width:400px;text-align:center;top:263.40px;font:normal 12px/12px 'Liberation Mono', monospace;color:#000;white-space:pre;">V</div>
<div style="left:21px;top:280.40px;font:normal 12px/12px 'Liberation Mono', monospace;color:#000;white-space:pre;letter-spacing:0.8px;">0012</div>
<div style="left:-121.0px;width:400px;text-align:center;top:280.40px;font:normal 12px/12px 'Liberation Mono', monospace;color:#000;white-space:pre;">1</div>
<div style="left:-97.0px;width:400px;text-align:center;top:280.40px;font:normal 12px/12px 'Liberation Mono', monospace;color:#000;white-space:pre;">1</div>
<div style="left:-73.0px;width:400px;text-align:center;top:280.40px;font:normal 12px/12px 'Liberation Mono', monospace;color:#000;white-space:pre;">0</div>
<div style="left:-49.0px;width:400px;text-align:center;top:280.40px;font:normal 12px/12px 'Liberation Mono', monospace;color:#000;white-space:pre;">0</div>
<div style="left:-25.0px;width:400px;text-align:center;top:280.40px;font:normal 12px/12px 'Liberation Mono', monospace;color:#000;white-space:pre;">0</div>
<div style="left:-1.0px;width:400px;text-align:center;top:280.40px;font:normal 12px/12px 'Liberation Mono', monospace;color:#000;white-space:pre;">0</div>
<div style="left:23.0px;width:400px;text-align:center;top:280.40px;font:normal 12px/12px 'Liberation Mono', monospace;color:#000;white-space:pre;">1</div>
<div style="left:47.0px;width:400px;text-align:center;top:280.40px;font:normal 12px/12px 'Liberation Mono', monospace;color:#000;white-space:pre;">G</div>
<div style="left:71.0px;width:400px;text-align:center;top:280.40px;font:normal 12px/12px 'Liberation Mono', monospace;color:#000;white-space:pre;">0</div>
<div style="left:98.0px;width:400px;text-align:center;top:280.40px;font:normal 12px/12px 'Liberation Mono', monospace;color:#000;white-space:pre;">1</div>
<div style="left:125.0px;width:400px;text-align:center;top:280.40px;font:normal 12px/12px 'Liberation Mono', monospace;color:#000;white-space:pre;">C</div>
<div style="left:149.0px;width:400px;text-align:center;top:280.40px;font:normal 12px/12px 'Liberation Mono', monospace;color:#000;white-space:pre;">H</div>
<div style="left:173.0px;width:400px;text-align:center;top:280.40px;font:normal 12px/12px 'Liberation Mono', monospace;color:#000;white-space:pre;">H</div>
<div style="left:197.0px;width:400px;text-align:center;top:280.40px;font:normal 12px/12px 'Liberation Mono', monospace;color:#000;white-space:pre;">H</div>
<div style="left:221.0px;width:400px;text-align:center;top:280.40px;font:normal 12px/12px 'Liberation Mono', monospace;color:#000;white-space:pre;">H</div>
<div style="left:245.0px;width:400px;text-align:center;top:280.40px;font:normal 12px/12px 'Liberation Mono', monospace;color:#000;white-space:pre;">V</div>
<div style="left:21px;top:297.40px;font:normal 12px/12px 'Liberation Mono', monospace;color:#000;white-space:pre;letter-spacing:0.8px;">0013</div>
<div style="left:-121.0px;width:400px;text-align:center;top:297.40px;font:normal 12px/12px 'Liberation Mono', monospace;color:#000;white-space:pre;">1</div>
<div style="left:-97.0px;width:400px;text-align:center;top:297.40px;font:normal 12px/12px 'Liberation Mono', monospace;color:#000;white-space:pre;">0</div>
<div style="left:-73.0px;width:400px;text-align:center;top:297.40px;font:normal 12px/12px 'Liberation Mono', monospace;color:#000;white-space:pre;">1</div>
<div style="left:-49.0px;width:400px;text-align:center;top:297.40px;font:normal 12px/12px 'Liberation Mono', monospace;color:#000;white-space:pre;">1</div>
<div style="left:-25.0px;width:400px;text-align:center;top:297.40px;font:normal 12px/12px 'Liberation Mono', monospace;color:#000;white-space:pre;">1</div>
<div style="left:-1.0px;width:400px;text-align:center;top:297.40px;font:normal 12px/12px 'Liberation Mono', monospace;color:#000;white-space:pre;">1</div>
<div style="left:23.0px;width:400px;text-align:center;top:297.40px;font:normal 12px/12px 'Liberation Mono', monospace;color:#000;white-space:pre;">0</div>
<div style="left:47.0px;width:400px;text-align:center;top:297.40px;font:normal 12px/12px 'Liberation Mono', monospace;color:#000;white-space:pre;">G</div>
<div style="left:71.0px;width:400px;text-align:center;top:297.40px;font:normal 12px/12px 'Liberation Mono', monospace;color:#000;white-space:pre;">0</div>
<div style="left:98.0px;width:400px;text-align:center;top:297.40px;font:normal 12px/12px 'Liberation Mono', monospace;color:#000;white-space:pre;">1</div>
<div style="left:125.0px;width:400px;text-align:center;top:297.40px;font:normal 12px/12px 'Liberation Mono', monospace;color:#000;white-space:pre;">C</div>
<div style="left:149.0px;width:400px;text-align:center;top:297.40px;font:normal 12px/12px 'Liberation Mono', monospace;color:#000;white-space:pre;">L</div>
<div style="left:173.0px;width:400px;text-align:center;top:297.40px;font:normal 12px/12px 'Liberation Mono', monospace;color:#000;white-space:pre;">H</div>
<div style="left:197.0px;width:400px;text-align:center;top:297.40px;font:normal 12px/12px 'Liberation Mono', monospace;color:#000;white-space:pre;">H</div>
<div style="left:221.0px;width:400px;text-align:center;top:297.40px;font:normal 12px/12px 'Liberation Mono', monospace;color:#000;white-space:pre;">H</div>
<div style="left:245.0px;width:400px;text-align:center;top:297.40px;font:normal 12px/12px 'Liberation Mono', monospace;color:#000;white-space:pre;">V</div>
<div style="left:21px;top:314.40px;font:normal 12px/12px 'Liberation Mono', monospace;color:#000;white-space:pre;letter-spacing:0.8px;">0014</div>
<div style="left:-121.0px;width:400px;text-align:center;top:314.40px;font:normal 12px/12px 'Liberation Mono', monospace;color:#000;white-space:pre;">1</div>
<div style="left:-97.0px;width:400px;text-align:center;top:314.40px;font:normal 12px/12px 'Liberation Mono', monospace;color:#000;white-space:pre;">0</div>
<div style="left:-73.0px;width:400px;text-align:center;top:314.40px;font:normal 12px/12px 'Liberation Mono', monospace;color:#000;white-space:pre;">0</div>
<div style="left:-49.0px;width:400px;text-align:center;top:314.40px;font:normal 12px/12px 'Liberation Mono', monospace;color:#000;white-space:pre;">0</div>
<div style="left:-25.0px;width:400px;text-align:center;top:314.40px;font:normal 12px/12px 'Liberation Mono', monospace;color:#000;white-space:pre;">0</div>
<div style="left:-1.0px;width:400px;text-align:center;top:314.40px;font:normal 12px/12px 'Liberation Mono', monospace;color:#000;white-space:pre;">0</div>
<div style="left:23.0px;width:400px;text-align:center;top:314.40px;font:normal 12px/12px 'Liberation Mono', monospace;color:#000;white-space:pre;">0</div>
<div style="left:47.0px;width:400px;text-align:center;top:314.40px;font:normal 12px/12px 'Liberation Mono', monospace;color:#000;white-space:pre;">G</div>
<div style="left:71.0px;width:400px;text-align:center;top:314.40px;font:normal 12px/12px 'Liberation Mono', monospace;color:#000;white-space:pre;">0</div>
<div style="left:98.0px;width:400px;text-align:center;top:314.40px;font:normal 12px/12px 'Liberation Mono', monospace;color:#000;white-space:pre;">1</div>
<div style="left:125.0px;width:400px;text-align:center;top:314.40px;font:normal 12px/12px 'Liberation Mono', monospace;color:#000;white-space:pre;">C</div>
<div style="left:149.0px;width:400px;text-align:center;top:314.40px;font:normal 12px/12px 'Liberation Mono', monospace;color:#000;white-space:pre;">L</div>
<div style="left:173.0px;width:400px;text-align:center;top:314.40px;font:normal 12px/12px 'Liberation Mono', monospace;color:#000;white-space:pre;">L</div>
<div style="left:197.0px;width:400px;text-align:center;top:314.40px;font:normal 12px/12px 'Liberation Mono', monospace;color:#000;white-space:pre;">H</div>
<div style="left:221.0px;width:400px;text-align:center;top:314.40px;font:normal 12px/12px 'Liberation Mono', monospace;color:#000;white-space:pre;">H</div>
<div style="left:245.0px;width:400px;text-align:center;top:314.40px;font:normal 12px/12px 'Liberation Mono', monospace;color:#000;white-space:pre;">V</div>
<div style="left:21px;top:331.40px;font:normal 12px/12px 'Liberation Mono', monospace;color:#000;white-space:pre;letter-spacing:0.8px;">0015</div>
<div style="left:-121.0px;width:400px;text-align:center;top:331.40px;font:normal 12px/12px 'Liberation Mono', monospace;color:#000;white-space:pre;">1</div>
<div style="left:-97.0px;width:400px;text-align:center;top:331.40px;font:normal 12px/12px 'Liberation Mono', monospace;color:#000;white-space:pre;">1</div>
<div style="left:-73.0px;width:400px;text-align:center;top:331.40px;font:normal 12px/12px 'Liberation Mono', monospace;color:#000;white-space:pre;">1</div>
<div style="left:-49.0px;width:400px;text-align:center;top:331.40px;font:normal 12px/12px 'Liberation Mono', monospace;color:#000;white-space:pre;">1</div>
<div style="left:-25.0px;width:400px;text-align:center;top:331.40px;font:normal 12px/12px 'Liberation Mono', monospace;color:#000;white-space:pre;">1</div>
<div style="left:-1.0px;width:400px;text-align:center;top:331.40px;font:normal 12px/12px 'Liberation Mono', monospace;color:#000;white-space:pre;">1</div>
<div style="left:23.0px;width:400px;text-align:center;top:331.40px;font:normal 12px/12px 'Liberation Mono', monospace;color:#000;white-space:pre;">1</div>
<div style="left:47.0px;width:400px;text-align:center;top:331.40px;font:normal 12px/12px 'Liberation Mono', monospace;color:#000;white-space:pre;">G</div>
<div style="left:71.0px;width:400px;text-align:center;top:331.40px;font:normal 12px/12px 'Liberation Mono', monospace;color:#000;white-space:pre;">0</div>
<div style="left:98.0px;width:400px;text-align:center;top:331.40px;font:normal 12px/12px 'Liberation Mono', monospace;color:#000;white-space:pre;">0</div>
<div style="left:125.0px;width:400px;text-align:center;top:331.40px;font:normal 12px/12px 'Liberation Mono', monospace;color:#000;white-space:pre;">C</div>
<div style="left:149.0px;width:400px;text-align:center;top:331.40px;font:normal 12px/12px 'Liberation Mono', monospace;color:#000;white-space:pre;">L</div>
<div style="left:173.0px;width:400px;text-align:center;top:331.40px;font:normal 12px/12px 'Liberation Mono', monospace;color:#000;white-space:pre;">L</div>
<div style="left:197.0px;width:400px;text-align:center;top:331.40px;font:normal 12px/12px 'Liberation Mono', monospace;color:#000;white-space:pre;">H</div>
<div style="left:221.0px;width:400px;text-align:center;top:331.40px;font:normal 12px/12px 'Liberation Mono', monospace;color:#000;white-space:pre;">H</div>
<div style="left:245.0px;width:400px;text-align:center;top:331.40px;font:normal 12px/12px 'Liberation Mono', monospace;color:#000;white-space:pre;">V</div>
<div style="left:21px;top:348.40px;font:normal 12px/12px 'Liberation Mono', monospace;color:#000;white-space:pre;letter-spacing:0.8px;">0016</div>
<div style="left:-121.0px;width:400px;text-align:center;top:348.40px;font:normal 12px/12px 'Liberation Mono', monospace;color:#000;white-space:pre;">1</div>
<div style="left:-97.0px;width:400px;text-align:center;top:348.40px;font:normal 12px/12px 'Liberation Mono', monospace;color:#000;white-space:pre;">0</div>
<div style="left:-73.0px;width:400px;text-align:center;top:348.40px;font:normal 12px/12px 'Liberation Mono', monospace;color:#000;white-space:pre;">0</div>
<div style="left:-49.0px;width:400px;text-align:center;top:348.40px;font:normal 12px/12px 'Liberation Mono', monospace;color:#000;white-space:pre;">0</div>
<div style="left:-25.0px;width:400px;text-align:center;top:348.40px;font:normal 12px/12px 'Liberation Mono', monospace;color:#000;white-space:pre;">0</div>
<div style="left:-1.0px;width:400px;text-align:center;top:348.40px;font:normal 12px/12px 'Liberation Mono', monospace;color:#000;white-space:pre;">0</div>
<div style="left:23.0px;width:400px;text-align:center;top:348.40px;font:normal 12px/12px 'Liberation Mono', monospace;color:#000;white-space:pre;">0</div>
<div style="left:47.0px;width:400px;text-align:center;top:348.40px;font:normal 12px/12px 'Liberation Mono', monospace;color:#000;white-space:pre;">G</div>
<div style="left:71.0px;width:400px;text-align:center;top:348.40px;font:normal 12px/12px 'Liberation Mono', monospace;color:#000;white-space:pre;">0</div>
<div style="left:98.0px;width:400px;text-align:center;top:348.40px;font:normal 12px/12px 'Liberation Mono', monospace;color:#000;white-space:pre;">0</div>
<div style="left:125.0px;width:400px;text-align:center;top:348.40px;font:normal 12px/12px 'Liberation Mono', monospace;color:#000;white-space:pre;">C</div>
<div style="left:149.0px;width:400px;text-align:center;top:348.40px;font:normal 12px/12px 'Liberation Mono', monospace;color:#000;white-space:pre;">L</div>
<div style="left:173.0px;width:400px;text-align:center;top:348.40px;font:normal 12px/12px 'Liberation Mono', monospace;color:#000;white-space:pre;">L</div>
<div style="left:197.0px;width:400px;text-align:center;top:348.40px;font:normal 12px/12px 'Liberation Mono', monospace;color:#000;white-space:pre;">H</div>
<div style="left:221.0px;width:400px;text-align:center;top:348.40px;font:normal 12px/12px 'Liberation Mono', monospace;color:#000;white-space:pre;">H</div>
<div style="left:245.0px;width:400px;text-align:center;top:348.40px;font:normal 12px/12px 'Liberation Mono', monospace;color:#000;white-space:pre;">V</div>
<div style="left:787px;top:66px;width:346px;height:1px;background:#808080;"></div>
<div style="left:787px;top:66px;width:1px;height:693px;background:#808080;"></div>
<div style="left:1132px;top:66px;width:1px;height:693px;background:#808080;"></div>
<div style="left:787px;top:758px;width:346px;height:1px;background:#808080;"></div>
<div style="left:788px;top:67px;width:344px;height:1px;background:#ffffff;"></div>
<div style="left:788px;top:67px;width:1px;height:691px;background:#ffffff;"></div>
<div style="left:1133px;top:66px;width:1px;height:694px;background:#ffffff;"></div>
<div style="left:787px;top:759px;width:347px;height:1px;background:#ffffff;"></div>
<div style="left:796px;top:60px;width:91px;height:12px;background:#d4d0c8;"></div>
<div style="left:797px;top:60.00px;font:normal 13px/13px 'Liberation Sans', sans-serif;color:#000;white-space:pre;">Pins Vector Set</div>
<svg style="left:896px;top:292px;width:100px;height:200px" width="100" height="200"><path d="M8 7 H42 L45 11 H52 L55 7 H88 V193 H8 Z" fill="#fff" stroke="#8c8c8c" stroke-width="2" stroke-linejoin="round"/></svg>
<div style="left:832px;top:302px;width:50px;height:22px;background:#ffffff;box-shadow:inset -1px -1px 0 0 #ffffff,inset 1px 1px 0 0 #808080,inset -2px -2px 0 0 #d4d0c8,inset 2px 2px 0 0 #404040"></div>
<div style="left:860px;top:304px;width:20px;height:18px;background:#d4d0c8;box-shadow:inset -1px -1px 0 0 #404040,inset 1px 1px 0 0 #d4d0c8,inset -2px -2px 0 0 #808080,inset 2px 2px 0 0 #ffffff"></div>
<div style="left:866px;top:312px;width:7px;height:1px;background:#000;"></div>
<div style="left:867px;top:313px;width:5px;height:1px;background:#000;"></div>
<div style="left:868px;top:314px;width:3px;height:1px;background:#000;"></div>
<div style="left:869px;top:315px;width:1px;height:1px;background:#000;"></div>
<div style="left:837px;top:308.38px;font:normal 13.33px/13.33px 'Liberation Mono', monospace;color:#000;white-space:pre;">0</div>
<div style="left:1006px;top:302px;width:50px;height:22px;background:#ffffff;box-shadow:inset -1px -1px 0 0 #ffffff,inset 1px 1px 0 0 #808080,inset -2px -2px 0 0 #d4d0c8,inset 2px 2px 0 0 #404040"></div>
<div style="left:1034px;top:304px;width:20px;height:18px;background:#d4d0c8;box-shadow:inset -1px -1px 0 0 #404040,inset 1px 1px 0 0 #d4d0c8,inset -2px -2px 0 0 #808080,inset 2px 2px 0 0 #ffffff"></div>
<div style="left:1040px;top:312px;width:7px;height:1px;background:#000;"></div>
<div style="left:1041px;top:313px;width:5px;height:1px;background:#000;"></div>
<div style="left:1042px;top:314px;width:3px;height:1px;background:#000;"></div>
<div style="left:1043px;top:315px;width:1px;height:1px;background:#000;"></div>
<div style="left:1010px;top:308.38px;font:normal 13.33px/13.33px 'Liberation Mono', monospace;color:#000;white-space:pre;">V</div>
<div style="left:888px;top:309px;width:16px;height:8px;background:#ffffff;box-shadow:inset 0 0 0 1px #8c8c8c"></div>
<div style="left:983px;top:309px;width:16px;height:8px;background:#ffffff;box-shadow:inset 0 0 0 1px #8c8c8c"></div>
<div style="left:715.5px;width:400px;text-align:center;top:311.03px;font:normal 16.5px/16.5px 'Liberation Sans', sans-serif;color:#000;white-space:pre;transform:scaleX(0.88);-webkit-text-stroke:0.3px #000;">1</div>
<div style="left:773px;width:400px;text-align:center;top:311.03px;font:normal 16.5px/16.5px 'Liberation Sans', sans-serif;color:#000;white-space:pre;transform:scaleX(0.88);-webkit-text-stroke:0.3px #000;">16</div>
<div style="left:832px;top:324px;width:50px;height:22px;background:#ffffff;box-shadow:inset -1px -1px 0 0 #ffffff,inset 1px 1px 0 0 #808080,inset -2px -2px 0 0 #d4d0c8,inset 2px 2px 0 0 #404040"></div>
<div style="left:860px;top:326px;width:20px;height:18px;background:#d4d0c8;box-shadow:inset -1px -1px 0 0 #404040,inset 1px 1px 0 0 #d4d0c8,inset -2px -2px 0 0 #808080,inset 2px 2px 0 0 #ffffff"></div>
<div style="left:866px;top:334px;width:7px;height:1px;background:#000;"></div>
<div style="left:867px;top:335px;width:5px;height:1px;background:#000;"></div>
<div style="left:868px;top:336px;width:3px;height:1px;background:#000;"></div>
<div style="left:869px;top:337px;width:1px;height:1px;background:#000;"></div>
<div style="left:837px;top:330.38px;font:normal 13.33px/13.33px 'Liberation Mono', monospace;color:#000;white-space:pre;">1</div>
<div style="left:1006px;top:324px;width:50px;height:22px;background:#ffffff;box-shadow:inset -1px -1px 0 0 #ffffff,inset 1px 1px 0 0 #808080,inset -2px -2px 0 0 #d4d0c8,inset 2px 2px 0 0 #404040"></div>
<div style="left:1034px;top:326px;width:20px;height:18px;background:#d4d0c8;box-shadow:inset -1px -1px 0 0 #404040,inset 1px 1px 0 0 #d4d0c8,inset -2px -2px 0 0 #808080,inset 2px 2px 0 0 #ffffff"></div>
<div style="left:1040px;top:334px;width:7px;height:1px;background:#000;"></div>
<div style="left:1041px;top:335px;width:5px;height:1px;background:#000;"></div>
<div style="left:1042px;top:336px;width:3px;height:1px;background:#000;"></div>
<div style="left:1043px;top:337px;width:1px;height:1px;background:#000;"></div>
<div style="left:1010px;top:330.38px;font:normal 13.33px/13.33px 'Liberation Mono', monospace;color:#000;white-space:pre;">L</div>
<div style="left:888px;top:331px;width:16px;height:8px;background:#ffffff;box-shadow:inset 0 0 0 1px #8c8c8c"></div>
<div style="left:983px;top:331px;width:16px;height:8px;background:#ffffff;box-shadow:inset 0 0 0 1px #8c8c8c"></div>
<div style="left:715.5px;width:400px;text-align:center;top:333.03px;font:normal 16.5px/16.5px 'Liberation Sans', sans-serif;color:#000;white-space:pre;transform:scaleX(0.88);-webkit-text-stroke:0.3px #000;">2</div>
<div style="left:773px;width:400px;text-align:center;top:333.03px;font:normal 16.5px/16.5px 'Liberation Sans', sans-serif;color:#000;white-space:pre;transform:scaleX(0.88);-webkit-text-stroke:0.3px #000;">15</div>
<div style="left:832px;top:346px;width:50px;height:22px;background:#ffffff;box-shadow:inset -1px -1px 0 0 #ffffff,inset 1px 1px 0 0 #808080,inset -2px -2px 0 0 #d4d0c8,inset 2px 2px 0 0 #404040"></div>
<div style="left:860px;top:348px;width:20px;height:18px;background:#d4d0c8;box-shadow:inset -1px -1px 0 0 #404040,inset 1px 1px 0 0 #d4d0c8,inset -2px -2px 0 0 #808080,inset 2px 2px 0 0 #ffffff"></div>
<div style="left:866px;top:356px;width:7px;height:1px;background:#000;"></div>
<div style="left:867px;top:357px;width:5px;height:1px;background:#000;"></div>
<div style="left:868px;top:358px;width:3px;height:1px;background:#000;"></div>
<div style="left:869px;top:359px;width:1px;height:1px;background:#000;"></div>
<div style="left:837px;top:352.38px;font:normal 13.33px/13.33px 'Liberation Mono', monospace;color:#000;white-space:pre;">1</div>
<div style="left:1006px;top:346px;width:50px;height:22px;background:#ffffff;box-shadow:inset -1px -1px 0 0 #ffffff,inset 1px 1px 0 0 #808080,inset -2px -2px 0 0 #d4d0c8,inset 2px 2px 0 0 #404040"></div>
<div style="left:1034px;top:348px;width:20px;height:18px;background:#d4d0c8;box-shadow:inset -1px -1px 0 0 #404040,inset 1px 1px 0 0 #d4d0c8,inset -2px -2px 0 0 #808080,inset 2px 2px 0 0 #ffffff"></div>
<div style="left:1040px;top:356px;width:7px;height:1px;background:#000;"></div>
<div style="left:1041px;top:357px;width:5px;height:1px;background:#000;"></div>
<div style="left:1042px;top:358px;width:3px;height:1px;background:#000;"></div>
<div style="left:1043px;top:359px;width:1px;height:1px;background:#000;"></div>
<div style="left:1010px;top:352.38px;font:normal 13.33px/13.33px 'Liberation Mono', monospace;color:#000;white-space:pre;">L</div>
<div style="left:888px;top:353px;width:16px;height:8px;background:#ffffff;box-shadow:inset 0 0 0 1px #8c8c8c"></div>
<div style="left:983px;top:353px;width:16px;height:8px;background:#ffffff;box-shadow:inset 0 0 0 1px #8c8c8c"></div>
<div style="left:715.5px;width:400px;text-align:center;top:355.03px;font:normal 16.5px/16.5px 'Liberation Sans', sans-serif;color:#000;white-space:pre;transform:scaleX(0.88);-webkit-text-stroke:0.3px #000;">3</div>
<div style="left:773px;width:400px;text-align:center;top:355.03px;font:normal 16.5px/16.5px 'Liberation Sans', sans-serif;color:#000;white-space:pre;transform:scaleX(0.88);-webkit-text-stroke:0.3px #000;">14</div>
<div style="left:832px;top:368px;width:50px;height:22px;background:#ffffff;box-shadow:inset -1px -1px 0 0 #ffffff,inset 1px 1px 0 0 #808080,inset -2px -2px 0 0 #d4d0c8,inset 2px 2px 0 0 #404040"></div>
<div style="left:860px;top:370px;width:20px;height:18px;background:#d4d0c8;box-shadow:inset -1px -1px 0 0 #404040,inset 1px 1px 0 0 #d4d0c8,inset -2px -2px 0 0 #808080,inset 2px 2px 0 0 #ffffff"></div>
<div style="left:866px;top:378px;width:7px;height:1px;background:#000;"></div>
<div style="left:867px;top:379px;width:5px;height:1px;background:#000;"></div>
<div style="left:868px;top:380px;width:3px;height:1px;background:#000;"></div>
<div style="left:869px;top:381px;width:1px;height:1px;background:#000;"></div>
<div style="left:837px;top:374.38px;font:normal 13.33px/13.33px 'Liberation Mono', monospace;color:#000;white-space:pre;">1</div>
<div style="left:1006px;top:368px;width:50px;height:22px;background:#ffffff;box-shadow:inset -1px -1px 0 0 #ffffff,inset 1px 1px 0 0 #808080,inset -2px -2px 0 0 #d4d0c8,inset 2px 2px 0 0 #404040"></div>
<div style="left:1034px;top:370px;width:20px;height:18px;background:#d4d0c8;box-shadow:inset -1px -1px 0 0 #404040,inset 1px 1px 0 0 #d4d0c8,inset -2px -2px 0 0 #808080,inset 2px 2px 0 0 #ffffff"></div>
<div style="left:1040px;top:378px;width:7px;height:1px;background:#000;"></div>
<div style="left:1041px;top:379px;width:5px;height:1px;background:#000;"></div>
<div style="left:1042px;top:380px;width:3px;height:1px;background:#000;"></div>
<div style="left:1043px;top:381px;width:1px;height:1px;background:#000;"></div>
<div style="left:1010px;top:374.38px;font:normal 13.33px/13.33px 'Liberation Mono', monospace;color:#000;white-space:pre;">L</div>
<div style="left:888px;top:375px;width:16px;height:8px;background:#ffffff;box-shadow:inset 0 0 0 1px #8c8c8c"></div>
<div style="left:983px;top:375px;width:16px;height:8px;background:#ffffff;box-shadow:inset 0 0 0 1px #8c8c8c"></div>
<div style="left:715.5px;width:400px;text-align:center;top:377.03px;font:normal 16.5px/16.5px 'Liberation Sans', sans-serif;color:#000;white-space:pre;transform:scaleX(0.88);-webkit-text-stroke:0.3px #000;">4</div>
<div style="left:773px;width:400px;text-align:center;top:377.03px;font:normal 16.5px/16.5px 'Liberation Sans', sans-serif;color:#000;white-space:pre;transform:scaleX(0.88);-webkit-text-stroke:0.3px #000;">13</div>
<div style="left:832px;top:390px;width:50px;height:22px;background:#ffffff;box-shadow:inset -1px -1px 0 0 #ffffff,inset 1px 1px 0 0 #808080,inset -2px -2px 0 0 #d4d0c8,inset 2px 2px 0 0 #404040"></div>
<div style="left:860px;top:392px;width:20px;height:18px;background:#d4d0c8;box-shadow:inset -1px -1px 0 0 #404040,inset 1px 1px 0 0 #d4d0c8,inset -2px -2px 0 0 #808080,inset 2px 2px 0 0 #ffffff"></div>
<div style="left:866px;top:400px;width:7px;height:1px;background:#000;"></div>
<div style="left:867px;top:401px;width:5px;height:1px;background:#000;"></div>
<div style="left:868px;top:402px;width:3px;height:1px;background:#000;"></div>
<div style="left:869px;top:403px;width:1px;height:1px;background:#000;"></div>
<div style="left:837px;top:396.38px;font:normal 13.33px/13.33px 'Liberation Mono', monospace;color:#000;white-space:pre;">1</div>
<div style="left:1006px;top:390px;width:50px;height:22px;background:#ffffff;box-shadow:inset -1px -1px 0 0 #ffffff,inset 1px 1px 0 0 #808080,inset -2px -2px 0 0 #d4d0c8,inset 2px 2px 0 0 #404040"></div>
<div style="left:1034px;top:392px;width:20px;height:18px;background:#d4d0c8;box-shadow:inset -1px -1px 0 0 #404040,inset 1px 1px 0 0 #d4d0c8,inset -2px -2px 0 0 #808080,inset 2px 2px 0 0 #ffffff"></div>
<div style="left:1040px;top:400px;width:7px;height:1px;background:#000;"></div>
<div style="left:1041px;top:401px;width:5px;height:1px;background:#000;"></div>
<div style="left:1042px;top:402px;width:3px;height:1px;background:#000;"></div>
<div style="left:1043px;top:403px;width:1px;height:1px;background:#000;"></div>
<div style="left:1010px;top:396.38px;font:normal 13.33px/13.33px 'Liberation Mono', monospace;color:#000;white-space:pre;">L</div>
<div style="left:888px;top:397px;width:16px;height:8px;background:#ffffff;box-shadow:inset 0 0 0 1px #8c8c8c"></div>
<div style="left:983px;top:397px;width:16px;height:8px;background:#ffffff;box-shadow:inset 0 0 0 1px #8c8c8c"></div>
<div style="left:715.5px;width:400px;text-align:center;top:399.03px;font:normal 16.5px/16.5px 'Liberation Sans', sans-serif;color:#000;white-space:pre;transform:scaleX(0.88);-webkit-text-stroke:0.3px #000;">5</div>
<div style="left:773px;width:400px;text-align:center;top:399.03px;font:normal 16.5px/16.5px 'Liberation Sans', sans-serif;color:#000;white-space:pre;transform:scaleX(0.88);-webkit-text-stroke:0.3px #000;">12</div>
<div style="left:832px;top:412px;width:50px;height:22px;background:#ffffff;box-shadow:inset -1px -1px 0 0 #ffffff,inset 1px 1px 0 0 #808080,inset -2px -2px 0 0 #d4d0c8,inset 2px 2px 0 0 #404040"></div>
<div style="left:860px;top:414px;width:20px;height:18px;background:#d4d0c8;box-shadow:inset -1px -1px 0 0 #404040,inset 1px 1px 0 0 #d4d0c8,inset -2px -2px 0 0 #808080,inset 2px 2px 0 0 #ffffff"></div>
<div style="left:866px;top:422px;width:7px;height:1px;background:#000;"></div>
<div style="left:867px;top:423px;width:5px;height:1px;background:#000;"></div>
<div style="left:868px;top:424px;width:3px;height:1px;background:#000;"></div>
<div style="left:869px;top:425px;width:1px;height:1px;background:#000;"></div>
<div style="left:837px;top:418.38px;font:normal 13.33px/13.33px 'Liberation Mono', monospace;color:#000;white-space:pre;">1</div>
<div style="left:1006px;top:412px;width:50px;height:22px;background:#ffffff;box-shadow:inset -1px -1px 0 0 #ffffff,inset 1px 1px 0 0 #808080,inset -2px -2px 0 0 #d4d0c8,inset 2px 2px 0 0 #404040"></div>
<div style="left:1034px;top:414px;width:20px;height:18px;background:#d4d0c8;box-shadow:inset -1px -1px 0 0 #404040,inset 1px 1px 0 0 #d4d0c8,inset -2px -2px 0 0 #808080,inset 2px 2px 0 0 #ffffff"></div>
<div style="left:1040px;top:422px;width:7px;height:1px;background:#000;"></div>
<div style="left:1041px;top:423px;width:5px;height:1px;background:#000;"></div>
<div style="left:1042px;top:424px;width:3px;height:1px;background:#000;"></div>
<div style="left:1043px;top:425px;width:1px;height:1px;background:#000;"></div>
<div style="left:1010px;top:418.38px;font:normal 13.33px/13.33px 'Liberation Mono', monospace;color:#000;white-space:pre;">C</div>
<div style="left:888px;top:419px;width:16px;height:8px;background:#ffffff;box-shadow:inset 0 0 0 1px #8c8c8c"></div>
<div style="left:983px;top:419px;width:16px;height:8px;background:#ffffff;box-shadow:inset 0 0 0 1px #8c8c8c"></div>
<div style="left:715.5px;width:400px;text-align:center;top:421.03px;font:normal 16.5px/16.5px 'Liberation Sans', sans-serif;color:#000;white-space:pre;transform:scaleX(0.88);-webkit-text-stroke:0.3px #000;">6</div>
<div style="left:773px;width:400px;text-align:center;top:421.03px;font:normal 16.5px/16.5px 'Liberation Sans', sans-serif;color:#000;white-space:pre;transform:scaleX(0.88);-webkit-text-stroke:0.3px #000;">11</div>
<div style="left:832px;top:434px;width:50px;height:22px;background:#ffffff;box-shadow:inset -1px -1px 0 0 #ffffff,inset 1px 1px 0 0 #808080,inset -2px -2px 0 0 #d4d0c8,inset 2px 2px 0 0 #404040"></div>
<div style="left:860px;top:436px;width:20px;height:18px;background:#d4d0c8;box-shadow:inset -1px -1px 0 0 #404040,inset 1px 1px 0 0 #d4d0c8,inset -2px -2px 0 0 #808080,inset 2px 2px 0 0 #ffffff"></div>
<div style="left:866px;top:444px;width:7px;height:1px;background:#000;"></div>
<div style="left:867px;top:445px;width:5px;height:1px;background:#000;"></div>
<div style="left:868px;top:446px;width:3px;height:1px;background:#000;"></div>
<div style="left:869px;top:447px;width:1px;height:1px;background:#000;"></div>
<div style="left:837px;top:440.38px;font:normal 13.33px/13.33px 'Liberation Mono', monospace;color:#000;white-space:pre;">1</div>
<div style="left:1006px;top:434px;width:50px;height:22px;background:#ffffff;box-shadow:inset -1px -1px 0 0 #ffffff,inset 1px 1px 0 0 #808080,inset -2px -2px 0 0 #d4d0c8,inset 2px 2px 0 0 #404040"></div>
<div style="left:1034px;top:436px;width:20px;height:18px;background:#d4d0c8;box-shadow:inset -1px -1px 0 0 #404040,inset 1px 1px 0 0 #d4d0c8,inset -2px -2px 0 0 #808080,inset 2px 2px 0 0 #ffffff"></div>
<div style="left:1040px;top:444px;width:7px;height:1px;background:#000;"></div>
<div style="left:1041px;top:445px;width:5px;height:1px;background:#000;"></div>
<div style="left:1042px;top:446px;width:3px;height:1px;background:#000;"></div>
<div style="left:1043px;top:447px;width:1px;height:1px;background:#000;"></div>
<div style="left:1010px;top:440.38px;font:normal 13.33px/13.33px 'Liberation Mono', monospace;color:#000;white-space:pre;">1</div>
<div style="left:888px;top:441px;width:16px;height:8px;background:#ffffff;box-shadow:inset 0 0 0 1px #8c8c8c"></div>
<div style="left:983px;top:441px;width:16px;height:8px;background:#ffffff;box-shadow:inset 0 0 0 1px #8c8c8c"></div>
<div style="left:715.5px;width:400px;text-align:center;top:443.03px;font:normal 16.5px/16.5px 'Liberation Sans', sans-serif;color:#000;white-space:pre;transform:scaleX(0.88);-webkit-text-stroke:0.3px #000;">7</div>
<div style="left:773px;width:400px;text-align:center;top:443.03px;font:normal 16.5px/16.5px 'Liberation Sans', sans-serif;color:#000;white-space:pre;transform:scaleX(0.88);-webkit-text-stroke:0.3px #000;">10</div>
<div style="left:832px;top:456px;width:50px;height:22px;background:#ffffff;box-shadow:inset -1px -1px 0 0 #ffffff,inset 1px 1px 0 0 #808080,inset -2px -2px 0 0 #d4d0c8,inset 2px 2px 0 0 #404040"></div>
<div style="left:860px;top:458px;width:20px;height:18px;background:#d4d0c8;box-shadow:inset -1px -1px 0 0 #404040,inset 1px 1px 0 0 #d4d0c8,inset -2px -2px 0 0 #808080,inset 2px 2px 0 0 #ffffff"></div>
<div style="left:866px;top:466px;width:7px;height:1px;background:#000;"></div>
<div style="left:867px;top:467px;width:5px;height:1px;background:#000;"></div>
<div style="left:868px;top:468px;width:3px;height:1px;background:#000;"></div>
<div style="left:869px;top:469px;width:1px;height:1px;background:#000;"></div>
<div style="left:837px;top:462.38px;font:normal 13.33px/13.33px 'Liberation Mono', monospace;color:#000;white-space:pre;">G</div>
<div style="left:1006px;top:456px;width:50px;height:22px;background:#ffffff;box-shadow:inset -1px -1px 0 0 #ffffff,inset 1px 1px 0 0 #808080,inset -2px -2px 0 0 #d4d0c8,inset 2px 2px 0 0 #404040"></div>
<div style="left:1034px;top:458px;width:20px;height:18px;background:#d4d0c8;box-shadow:inset -1px -1px 0 0 #404040,inset 1px 1px 0 0 #d4d0c8,inset -2px -2px 0 0 #808080,inset 2px 2px 0 0 #ffffff"></div>
<div style="left:1040px;top:466px;width:7px;height:1px;background:#000;"></div>
<div style="left:1041px;top:467px;width:5px;height:1px;background:#000;"></div>
<div style="left:1042px;top:468px;width:3px;height:1px;background:#000;"></div>
<div style="left:1043px;top:469px;width:1px;height:1px;background:#000;"></div>
<div style="left:1010px;top:462.38px;font:normal 13.33px/13.33px 'Liberation Mono', monospace;color:#000;white-space:pre;">1</div>
<div style="left:888px;top:463px;width:16px;height:8px;background:#ffffff;box-shadow:inset 0 0 0 1px #8c8c8c"></div>
<div style="left:983px;top:463px;width:16px;height:8px;background:#ffffff;box-shadow:inset 0 0 0 1px #8c8c8c"></div>
<div style="left:715.5px;width:400px;text-align:center;top:465.03px;font:normal 16.5px/16.5px 'Liberation Sans', sans-serif;color:#000;white-space:pre;transform:scaleX(0.88);-webkit-text-stroke:0.3px #000;">8</div>
<div style="left:773px;width:400px;text-align:center;top:465.03px;font:normal 16.5px/16.5px 'Liberation Sans', sans-serif;color:#000;white-space:pre;transform:scaleX(0.88);-webkit-text-stroke:0.3px #000;">9</div>
<div style="left:-280px;width:400px;text-align:right;top:548.00px;font:normal 13px/13px 'Liberation Sans', sans-serif;color:#000;white-space:pre;">IC Model:</div>
<div style="left:-280px;width:400px;text-align:right;top:582.00px;font:normal 13px/13px 'Liberation Sans', sans-serif;color:#000;white-space:pre;">Pins Counter:</div>
<div style="left:-280px;width:400px;text-align:right;top:616.00px;font:normal 13px/13px 'Liberation Sans', sans-serif;color:#000;white-space:pre;letter-spacing:-0.15px;">VCC Voltage:</div>
<div style="left:133px;top:542px;width:163px;height:24px;background:#d4d0c8;box-shadow:inset -1px -1px 0 0 #ffffff,inset 1px 1px 0 0 #808080,inset -2px -2px 0 0 #d4d0c8,inset 2px 2px 0 0 #404040"></div>
<div style="left:139px;top:548.42px;font:normal 12.5px/12.5px 'Liberation Sans', sans-serif;color:#808080;white-space:pre;">74194</div>
<div style="left:133px;top:574px;width:77px;height:24px;background:#d4d0c8;box-shadow:inset -1px -1px 0 0 #ffffff,inset 1px 1px 0 0 #808080,inset -2px -2px 0 0 #d4d0c8,inset 2px 2px 0 0 #404040"></div>
<div style="left:188px;top:576px;width:20px;height:20px;background:#d4d0c8;box-shadow:inset -1px -1px 0 0 #404040,inset 1px 1px 0 0 #d4d0c8,inset -2px -2px 0 0 #808080,inset 2px 2px 0 0 #ffffff"></div>
<div style="left:194px;top:585px;width:9px;height:1px;background:#fff;"></div>
<div style="left:195px;top:586px;width:7px;height:1px;background:#fff;"></div>
<div style="left:196px;top:587px;width:5px;height:1px;background:#fff;"></div>
<div style="left:197px;top:588px;width:3px;height:1px;background:#fff;"></div>
<div style="left:198px;top:589px;width:1px;height:1px;background:#fff;"></div>
<div style="left:193px;top:584px;width:9px;height:1px;background:#808080;"></div>
<div style="left:194px;top:585px;width:7px;height:1px;background:#808080;"></div>
<div style="left:195px;top:586px;width:5px;height:1px;background:#808080;"></div>
<div style="left:196px;top:587px;width:3px;height:1px;background:#808080;"></div>
<div style="left:197px;top:588px;width:1px;height:1px;background:#808080;"></div>
<div style="left:137px;top:581.42px;font:normal 12.5px/12.5px 'Liberation Sans', sans-serif;color:#808080;white-space:pre;">16</div>
<div style="left:133px;top:610px;width:77px;height:24px;background:#ffffff;box-shadow:inset -1px -1px 0 0 #ffffff,inset 1px 1px 0 0 #808080,inset -2px -2px 0 0 #d4d0c8,inset 2px 2px 0 0 #404040"></div>
<div style="left:188px;top:612px;width:20px;height:20px;background:#d4d0c8;box-shadow:inset -1px -1px 0 0 #404040,inset 1px 1px 0 0 #d4d0c8,inset -2px -2px 0 0 #808080,inset 2px 2px 0 0 #ffffff"></div>
<div style="left:193px;top:620px;width:9px;height:1px;background:#000;"></div>
<div style="left:194px;top:621px;width:7px;height:1px;background:#000;"></div>
<div style="left:195px;top:622px;width:5px;height:1px;background:#000;"></div>
<div style="left:196px;top:623px;width:3px;height:1px;background:#000;"></div>
<div style="left:197px;top:624px;width:1px;height:1px;background:#000;"></div>
<div style="left:136px;top:617.42px;font:normal 12.5px/12.5px 'Liberation Sans', sans-serif;color:#000;white-space:pre;">5.0V</div>
<div style="left:376px;top:530px;width:207px;height:1px;background:#808080;"></div>
<div style="left:376px;top:530px;width:1px;height:198px;background:#808080;"></div>
<div style="left:582px;top:530px;width:1px;height:198px;background:#808080;"></div>
<div style="left:376px;top:727px;width:207px;height:1px;background:#808080;"></div>
<div style="left:377px;top:531px;width:205px;height:1px;background:#ffffff;"></div>
<div style="left:377px;top:531px;width:1px;height:196px;background:#ffffff;"></div>
<div style="left:583px;top:530px;width:1px;height:199px;background:#ffffff;"></div>
<div style="left:376px;top:728px;width:208px;height:1px;background:#ffffff;"></div>
<div style="left:385px;top:524px;width:126px;height:12px;background:#d4d0c8;"></div>
<div style="left:387px;top:524.00px;font:normal 13px/13px 'Liberation Sans', sans-serif;color:#000;white-space:pre;">Vector Symbol Define</div>
<div style="left:393px;top:556.00px;font:normal 13px/13px 'Liberation Sans', sans-serif;color:#000;white-space:pre;">0: Input Low</div>
<div style="left:393px;top:572.00px;font:normal 13px/13px 'Liberation Sans', sans-serif;color:#000;white-space:pre;">1: Input High</div>
<div style="left:393px;top:588.00px;font:normal 13px/13px 'Liberation Sans', sans-serif;color:#000;white-space:pre;">L: Out Low</div>
<div style="left:393px;top:604.00px;font:normal 13px/13px 'Liberation Sans', sans-serif;color:#000;white-space:pre;">H: Out High</div>
<div style="left:393px;top:620.00px;font:normal 13px/13px 'Liberation Sans', sans-serif;color:#000;white-space:pre;">C: Pulse Input</div>
<div style="left:393px;top:636.00px;font:normal 13px/13px 'Liberation Sans', sans-serif;color:#000;white-space:pre;">Z: High Impedance</div>
<div style="left:393px;top:652.00px;font:normal 13px/13px 'Liberation Sans', sans-serif;color:#000;white-space:pre;"> OC High or 3S</div>
<div style="left:393px;top:668.00px;font:normal 13px/13px 'Liberation Sans', sans-serif;color:#000;white-space:pre;">X: Ignore</div>
<div style="left:393px;top:684.00px;font:normal 13px/13px 'Liberation Sans', sans-serif;color:#000;white-space:pre;">G: GND</div>
<div style="left:393px;top:700.00px;font:normal 13px/13px 'Liberation Sans', sans-serif;color:#000;white-space:pre;">V: VCC</div>
<div style="left:600px;top:604px;width:116px;height:30px;background:#d4d0c8;box-shadow:inset -1px -1px 0 0 #404040,inset 1px 1px 0 0 #ffffff,inset -2px -2px 0 0 #808080,inset 2px 2px 0 0 #d4d0c8"></div>
<div style="left:459.0px;width:400px;text-align:center;top:613.00px;font:normal 13px/13px 'Liberation Sans', sans-serif;color:#fff;white-space:pre;">Delete Line</div>
<div style="left:458.0px;width:400px;text-align:center;top:612.00px;font:normal 13px/13px 'Liberation Sans', sans-serif;color:#808080;white-space:pre;">Delete Line</div>
<div style="left:600px;top:652px;width:114px;height:30px;background:#d4d0c8;box-shadow:inset -1px -1px 0 0 #404040,inset 1px 1px 0 0 #ffffff,inset -2px -2px 0 0 #808080,inset 2px 2px 0 0 #d4d0c8"></div>
<div style="left:458.0px;width:400px;text-align:center;top:661.00px;font:normal 13px/13px 'Liberation Sans', sans-serif;color:#fff;white-space:pre;">Modify Line</div>
<div style="left:457.0px;width:400px;text-align:center;top:660.00px;font:normal 13px/13px 'Liberation Sans', sans-serif;color:#808080;white-space:pre;">Modify Line</div>
<div style="left:600px;top:700px;width:114px;height:30px;background:#d4d0c8;box-shadow:inset -1px -1px 0 0 #404040,inset 1px 1px 0 0 #ffffff,inset -2px -2px 0 0 #808080,inset 2px 2px 0 0 #d4d0c8"></div>
<div style="left:457.0px;width:400px;text-align:center;top:708.00px;font:normal 13px/13px 'Liberation Sans', sans-serif;color:#000;white-space:pre;">New Line</div>
<div style="left:80px;top:732px;width:119px;height:28px;background:#000;"></div>
<div style="left:81px;top:733px;width:117px;height:26px;background:#d4d0c8;box-shadow:inset -1px -1px 0 0 #404040,inset 1px 1px 0 0 #ffffff,inset -2px -2px 0 0 #808080,inset 2px 2px 0 0 #d4d0c8"></div>
<div style="left:-60.5px;width:400px;text-align:center;top:739.00px;font:normal 13px/13px 'Liberation Sans', sans-serif;color:#000;white-space:pre;">Save Edit</div>
<div style="left:84px;top:736px;width:111px;height:20px;box-sizing:border-box;border:1px dotted #000"></div>
<div style="left:227px;top:732px;width:110px;height:28px;background:#d4d0c8;box-shadow:inset -1px -1px 0 0 #404040,inset 1px 1px 0 0 #ffffff,inset -2px -2px 0 0 #808080,inset 2px 2px 0 0 #d4d0c8"></div>
<div style="left:82.0px;width:400px;text-align:center;top:739.00px;font:normal 13px/13px 'Liberation Sans', sans-serif;color:#000;white-space:pre;">Back</div>
</body></html>
